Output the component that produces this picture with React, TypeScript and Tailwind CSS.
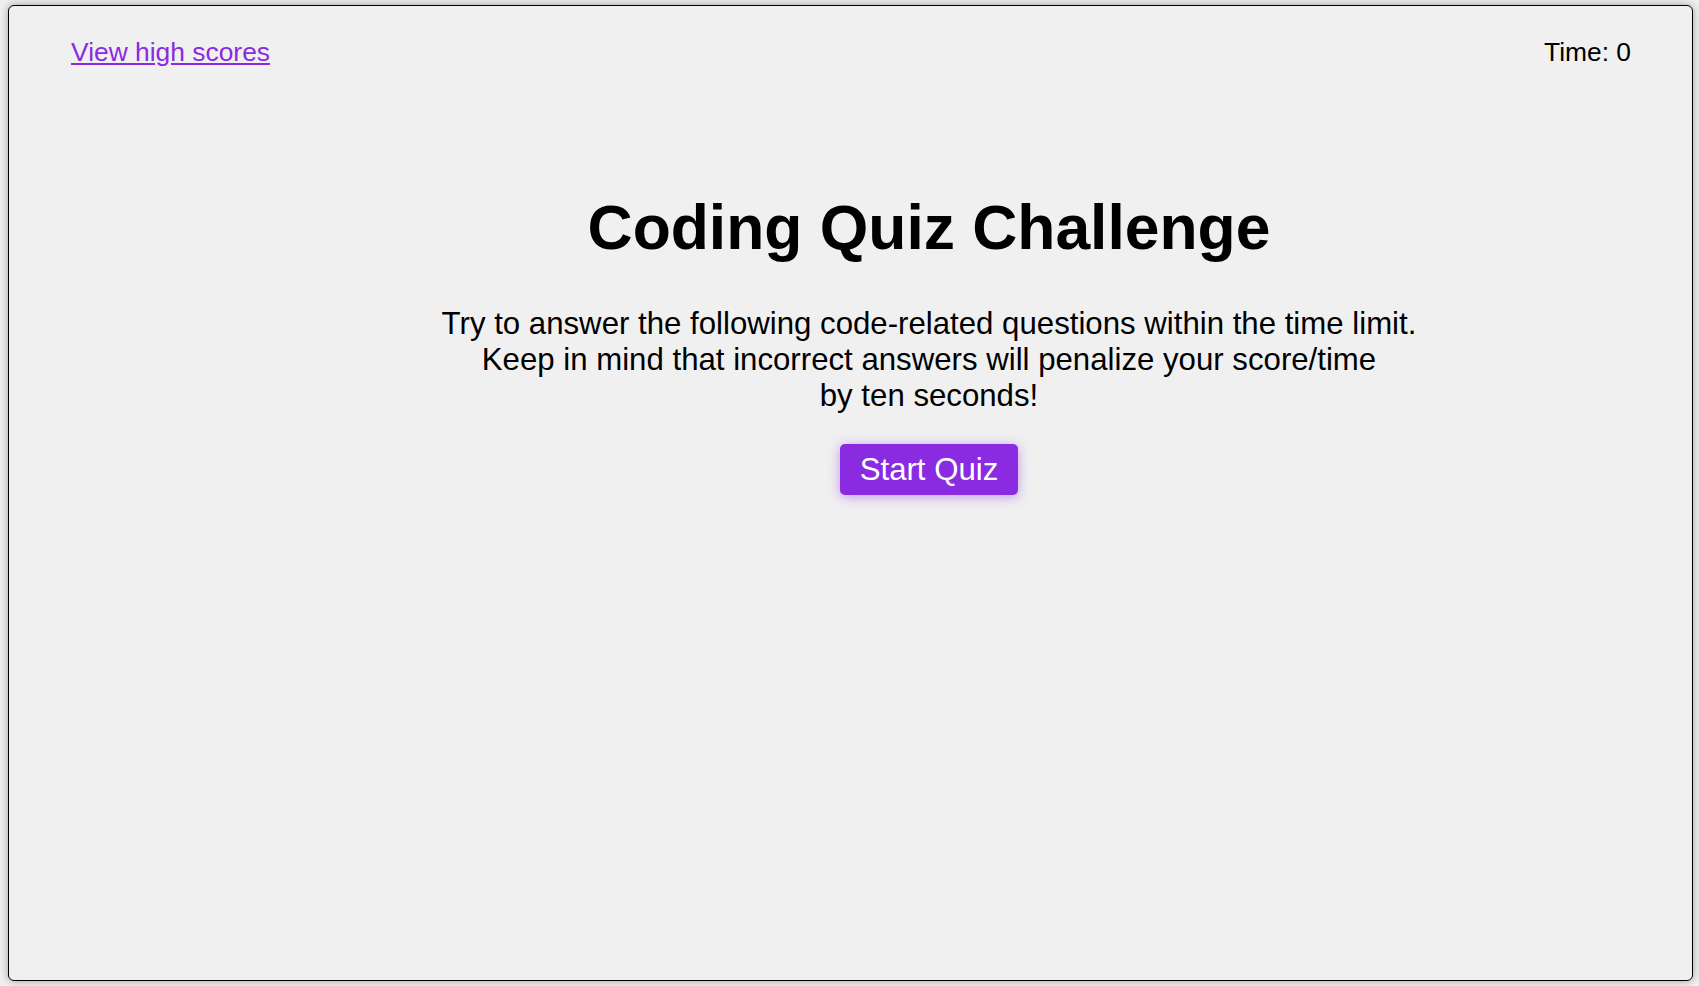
import React from 'react';

const font = { fontFamily: '"Liberation Sans", Arial, sans-serif' };

export default function App() {
  return (
    <div className="min-h-screen bg-[#f0f0f0] pt-[5px] pl-[8px]" style={font}>
      <div className="w-[1685px] h-[976px] border border-black rounded-[6px] bg-[#f0f0f0] shadow-[0_0_8px_rgba(0,0,0,0.35)] flex flex-col">
        <header className="flex items-start justify-between pl-[62px] pr-[61px] pt-[31px]">
          <a href="#" className="text-[26.4px] leading-[30px] text-[#8a2be2] underline">
            View high scores
          </a>
          <span className="text-[26.4px] leading-[30px] text-black">Time: 0</span>
        </header>

        <main className="flex flex-col items-center pl-[157px]">
          <h1 className="mt-[125px] text-[62.4px] leading-[72px] font-bold text-black">
            Coding Quiz Challenge
          </h1>
          <p className="mt-[42px] text-[31.2px] leading-[36px] text-center text-black">
            Try to answer the following code-related questions within the time limit.
            <br />
            Keep in mind that incorrect answers will penalize your score/time
            <br />
            by ten seconds!
          </p>
          <button className="mt-[30px] w-[178px] h-[51px] rounded-[5px] bg-[#8a2be2] text-white text-[31.2px] leading-[36px] shadow-[0_2px_12px_rgba(138,43,226,0.45)]">
            Start Quiz
          </button>
        </main>
      </div>
    </div>
  );
}
